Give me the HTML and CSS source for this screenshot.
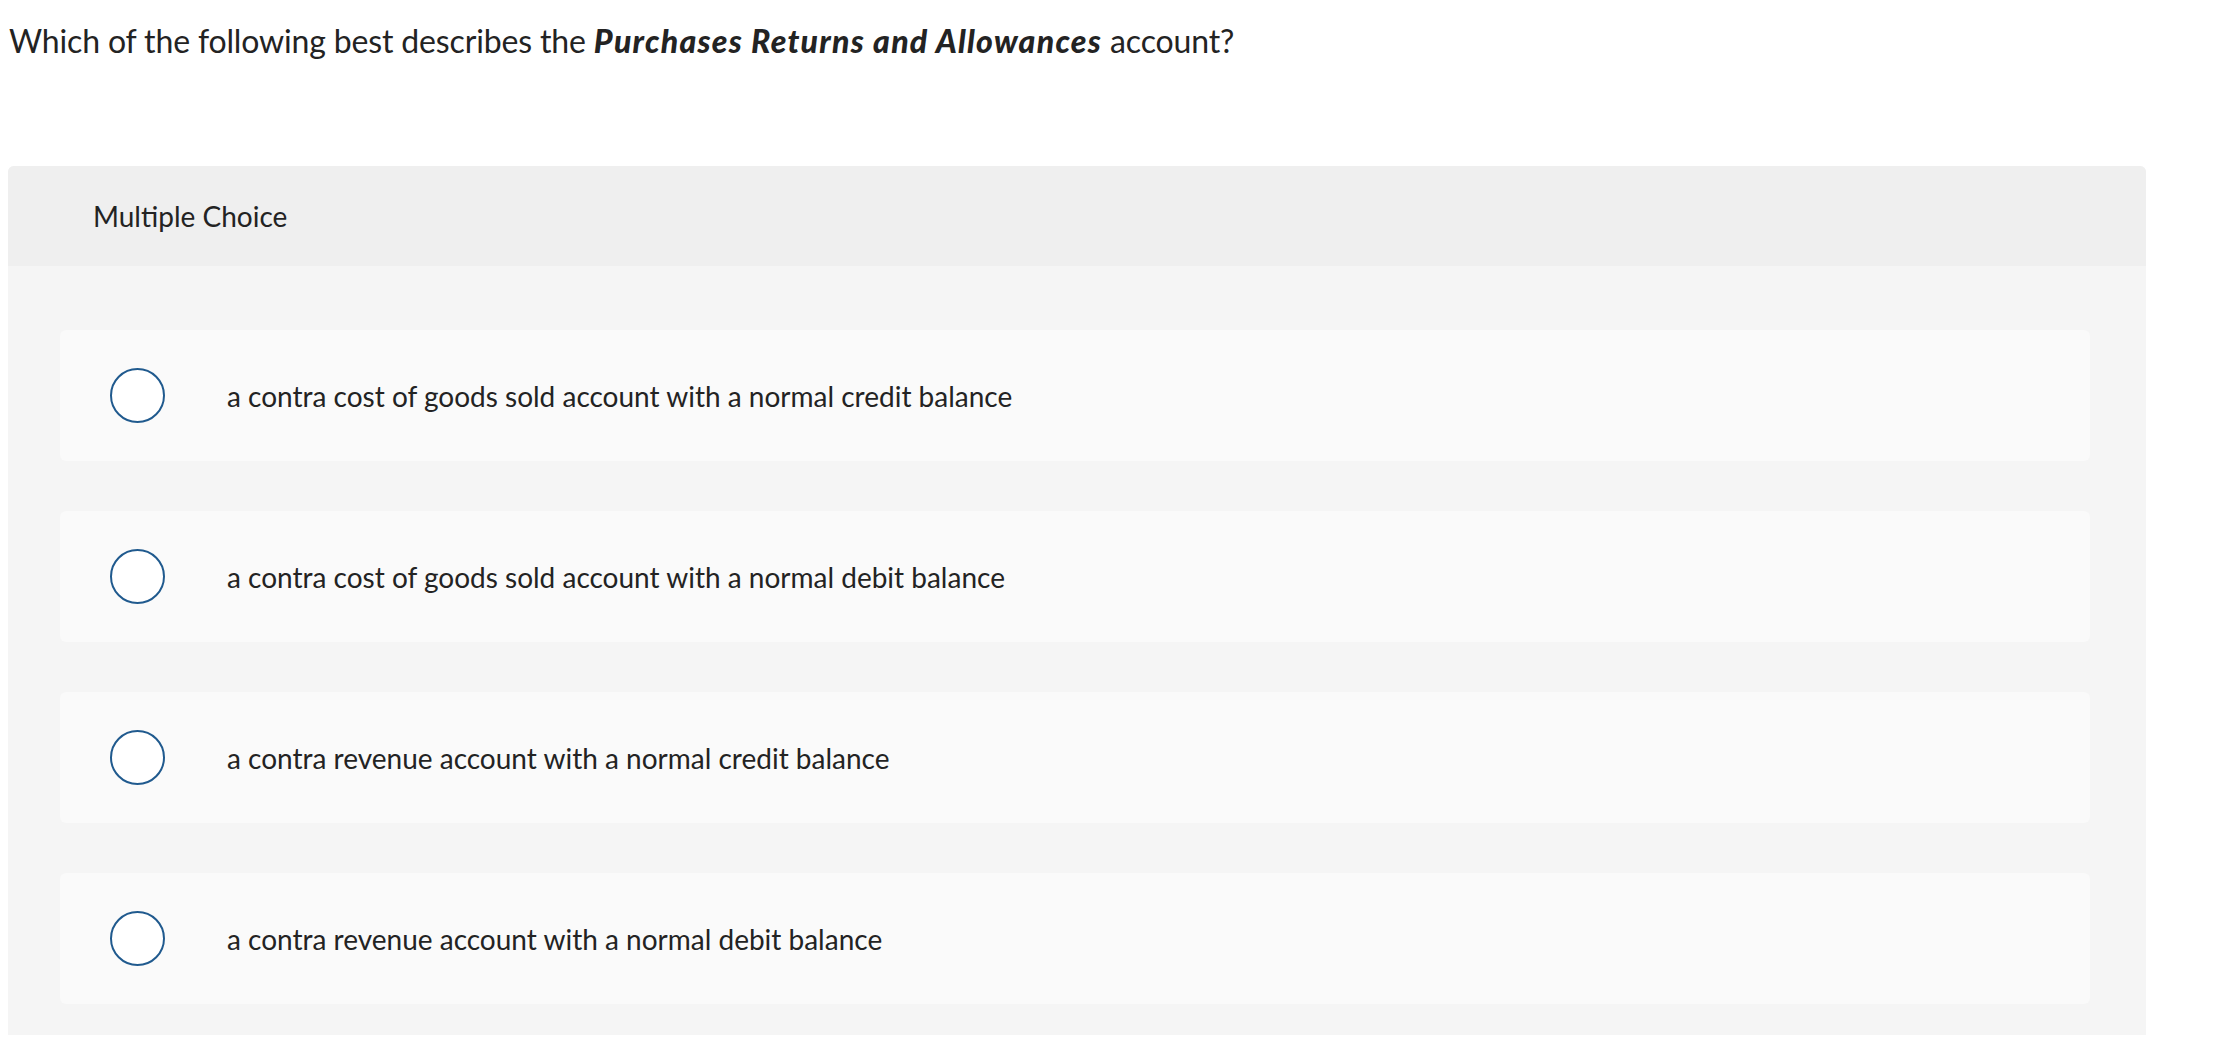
FILE: index.html
```html
<!DOCTYPE html>
<html lang="en">
<head>
<meta charset="utf-8">
<title>Multiple Choice</title>
<link rel="stylesheet" href="styles.css">
</head>
<body>
<div class="question">Which of the following best describes the <strong><em>Purchases Returns and Allowances</em></strong> account?</div>
<section class="card">
  <header class="card-head">Multiple Choice</header>
  <div class="card-body">
    <label class="option"><span class="radio"></span><span class="opt-text">a contra cost of goods sold account with a normal credit balance</span></label>
    <label class="option"><span class="radio"></span><span class="opt-text">a contra cost of goods sold account with a normal debit balance</span></label>
    <label class="option"><span class="radio"></span><span class="opt-text">a contra revenue account with a normal credit balance</span></label>
    <label class="option"><span class="radio"></span><span class="opt-text">a contra revenue account with a normal debit balance</span></label>
  </div>
</section>
</body>
</html>
```
FILE: styles.css
```css
html, body {
  margin: 0;
  padding: 0;
  background: #ffffff;
}
body {
  padding: 0 8px;
  font-family: "Lato", "Liberation Sans", sans-serif;
  color: #232323;
}
.question {
  font-size: 32px;
  line-height: 40px;
  padding: 21px 0 0 1px;
  height: 166px;
  box-sizing: border-box;
  letter-spacing: -0.15px;
}
.question strong {
  font-weight: 900;
  letter-spacing: 1.25px;
}
.card {
  width: 2138px;
  background: #f5f5f5;
  border-radius: 6px 6px 0 0;
  overflow: hidden;
}
.card-head {
  height: 100px;
  background: #efefef;
  display: flex;
  align-items: center;
  padding-left: 85px;
  font-size: 28px;
}
.card-body {
  padding: 64px 56px 31px 52px;
  display: flex;
  flex-direction: column;
  gap: 50px;
}
.option {
  height: 131px;
  background: #fafafa;
  border-radius: 6px;
  display: flex;
  align-items: center;
  padding-left: 50px;
}
.radio {
  width: 55px;
  height: 55px;
  box-sizing: border-box;
  border: 2.5px solid #205a8e;
  border-radius: 50%;
  background: #ffffff;
  flex: none;
}
.opt-text {
  margin-left: 62px;
  font-size: 28px;
}
```
